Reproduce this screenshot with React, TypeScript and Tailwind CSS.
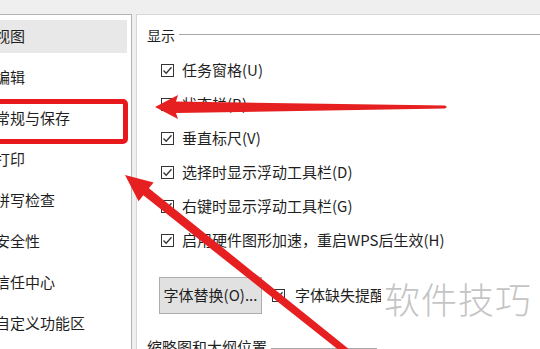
import React from 'react';

const navItems = ['视图', '编辑', '常规与保存', '打印', '拼写检查', '安全性', '信任中心', '自定义功能区'];

const options = [
	'任务窗格(U)',
	'状态栏(B)',
	'垂直标尺(V)',
	'选择时显示浮动工具栏(D)',
	'右键时显示浮动工具栏(G)',
	'启用硬件图形加速，重启WPS后生效(H)',
];

function Check() {
	return (
		<span className="w-[13px] h-[13px] shrink-0 border border-[#333] bg-white flex items-center justify-center">
			<svg width="11" height="11" viewBox="0 0 11 11">
				<polyline points="1.5,5.5 4.2,8.3 9.5,2.2" fill="none" stroke="#333" strokeWidth="1.3" />
			</svg>
		</span>
	);
}

export default function App() {
	return (
		<div className="relative w-[540px] h-[349px] overflow-hidden bg-[#efefef] pt-[14px] flex font-['Noto_Sans_CJK_SC',sans-serif] text-[#1f1f1f]">
			{/* left nav */}
			<div className="w-[132px] shrink-0 bg-white border-r border-t border-[#b4b4b4] pt-[5px] pr-[4px]">
				{navItems.map((n, i) => (
					<div
						key={n}
						className={`h-[33px] mb-[8px] -ml-[5px] flex items-center text-[15px] whitespace-nowrap ${i === 0 ? 'bg-[#e8e8e8]' : ''}`}
					>
						{n}
					</div>
				))}
			</div>

			{/* right panel */}
			<div className="flex-1 ml-[4px] bg-white border-l border-t border-[#d6d6d6] pl-[10px] pt-[10px]">
				<div className="h-[20px] flex items-center text-[14px]">
					<span>显示</span>
					<span className="flex-1 h-px bg-[#a8a8a8] ml-[4px] -mt-[2px]" />
				</div>
				<div className="mt-[8px]">
					{options.map((o) => (
						<div key={o} className="h-[34px] pl-[14px] flex items-center gap-[8px] text-[15px] whitespace-nowrap">
							<Check />
							<span>{o}</span>
						</div>
					))}
				</div>
				<div className="mt-[20px] flex items-center whitespace-nowrap">
					<button className="ml-[12px] w-[103px] h-[37px] bg-[#e1e1e1] border border-[#adadad] text-[15px] flex items-center justify-center">
						字体替换(O)...
					</button>
					<span className="ml-[10px]">
						<Check />
					</span>
					<span className="ml-[10px] text-[15px]">字体缺失提醒</span>
				</div>
				<div className="mt-[23px] h-[20px] flex items-center text-[15px] whitespace-nowrap pr-[163px]">
					<span>缩略图和大纲位置</span>
					<span className="flex-1 h-px bg-[#a8a8a8] ml-[4px] mt-[3px]" />
				</div>
			</div>

			{/* watermark */}
			<div className="absolute left-[381px] top-[276px] bg-white px-[3px] text-[36px] font-light text-[#c4c4c4] leading-[44px] tracking-[1px]">
				软件技巧
			</div>

			{/* red highlight box */}
			<div className="absolute left-[-12px] top-[99px] w-[140px] h-[45px] border-[5px] border-[#e8191c] rounded-[5px]" />

			{/* arrows */}
			<svg className="absolute left-0 top-0 pointer-events-none" width="540" height="349" viewBox="0 0 540 349">
				<polygon
					points="155,107 178,95 176,101.5 445,105.5 447,107 445,108.5 176,113 178,119"
					fill="#e62020"
				/>
				<polygon
					points="125,175 153.6,182.4 148.9,188.3 361.5,359.2 357.1,364.6 143.3,195.3 138.6,201.2"
					fill="#e62020"
				/>
			</svg>
		</div>
	);
}
